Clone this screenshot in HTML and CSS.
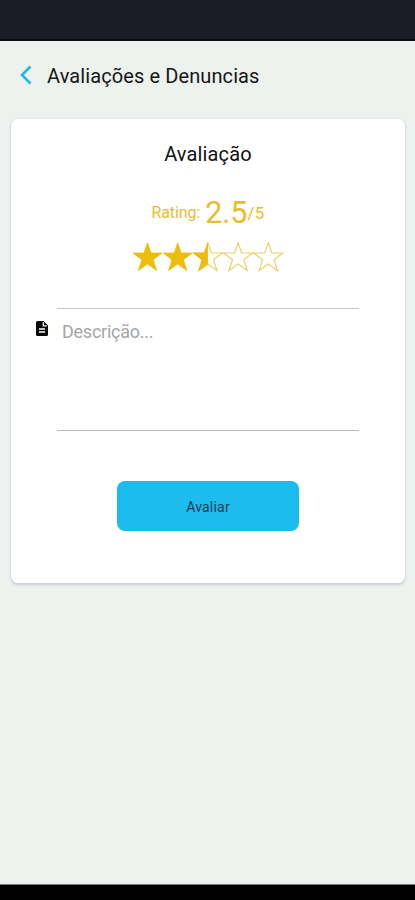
FILE: index.html
```html
<!DOCTYPE html>
<html lang="pt">
<head>
<meta charset="utf-8">
<title>Avaliações e Denuncias</title>
<link rel="stylesheet" href="styles.css">
</head>
<body>
<div class="status-bar"></div>
<header class="header">
  <svg class="back" width="12" height="20" viewBox="0 0 12 20"><path d="M10.500 1.500 2 10l8.500 8.500"/></svg>
  <h1 class="title">Avaliações e Denuncias</h1>
</header>
<main class="card">
  <h2 class="card-title">Avaliação</h2>
  <p class="rating"><span class="label">Rating:</span><span class="score">2.5</span><span class="total">/5</span></p>
  <svg class="stars" width="152" height="30" viewBox="0 0 152 30">
    <defs>
      <path id="star" d="M15.500 .8 19 11h11l-8.800 6.700L24.600 28.500 15.500 22 6.400 28.500 9.800 17.700 1 11h11z"/>
      <clipPath id="half"><path d="M0 0h15.500v30H0z"/></clipPath>
    </defs>
    <use href="#star" class="full"/>
    <use href="#star" class="full" x="30.200"/>
    <g transform="translate(60.400)"><use href="#star" class="empty"/><use href="#star" class="full" clip-path="url(#half)"/></g>
    <use href="#star" class="empty" x="90.600"/>
    <use href="#star" class="empty" x="120.800"/>
  </svg>
  <div class="field">
    <svg class="doc" width="12" height="15" viewBox="0 0 12 15"><path class="page" d="M1.500 0h6L12 4.500v9a1.500 1.500 0 0 1-1.500 1.500h-9A1.500 1.500 0 0 1 0 13.500v-12A1.500 1.500 0 0 1 1.500 0z"/><path class="lines" d="M7.300 1.300v3.500h3.500M3 8h6M3 11h6"/></svg>
    <div class="input">Descrição...</div>
  </div>
  <button class="submit">Avaliar</button>
</main>
<div class="nav-bar"></div>
</body>
</html>
```
FILE: styles.css
```css
* { box-sizing: border-box; margin: 0; padding: 0; }
body {
  height: 900px;
  display: flex;
  flex-direction: column;
  background: #edf2ee;
  font-family: Roboto, sans-serif;
  color: #161616;
  overflow: hidden;
}
.status-bar { height: 41px; background: #1a1d25; border-bottom: 2px solid #0b0c0f; }
.header { height: 78px; display: flex; align-items: flex-start; padding: 24px 0 0 20px; }
.back { margin-right: 15px; fill: none; stroke: #28b5e8; stroke-width: 2.600; }
.title { font-size: 20px; font-weight: 400; line-height: 22px; letter-spacing: .1px; }
.card {
  height: 464px;
  margin: 0 10px 0 11px;
  display: flex;
  flex-direction: column;
  align-items: center;
  background: #fff;
  border-radius: 7px;
  box-shadow: 0 2px 3px #cfc9d8, 0 0 2px #ddd5da;
}
.card-title { margin-top: 23px; font-size: 20px; font-weight: 400; line-height: 24px; letter-spacing: .15px; color: #111; }
.rating { margin-top: 29px; height: 36px; display: flex; align-items: center; line-height: 36px; color: #e9bd2b; }
.label { font-size: 16px; letter-spacing: -.1px; margin-right: 5px; }
.score { font-size: 30.500px; }
.total { font-size: 17px; letter-spacing: .2px; }
.stars { margin-top: 11px; }
.full { fill: #edbd0c; stroke: #edbd0c; stroke-width: .8; }
.empty { fill: none; stroke: #ead16b; stroke-width: 1.200; }
.field { align-self: stretch; display: flex; margin: 36px 46px 0 25px; }
.doc { margin: 13px 9px 0 0; }
.page { fill: #080808; }
.lines { fill: none; stroke: #fff; stroke-width: 1.300; }
.input {
  flex: 1;
  height: 123px;
  padding: 12px 0 0 5px;
  border-top: 1px solid #c4c4c4;
  border-bottom: 1px solid #b8b8b8;
  font-size: 18px;
  line-height: 22px;
  letter-spacing: -.25px;
  color: #a6a6a6;
}
.submit {
  width: 182px;
  height: 50px;
  margin: 50px 0 0 0;
  border: 0;
  border-radius: 8px;
  background: #1cbcee;
  font: 14px/18px Roboto, sans-serif;
  padding-top: 2px;
  letter-spacing: .2px;
  color: #153e50;
}
.nav-bar { height: 16px; margin-top: auto; background: #000; border-top: 1px solid #777b78; }
```
